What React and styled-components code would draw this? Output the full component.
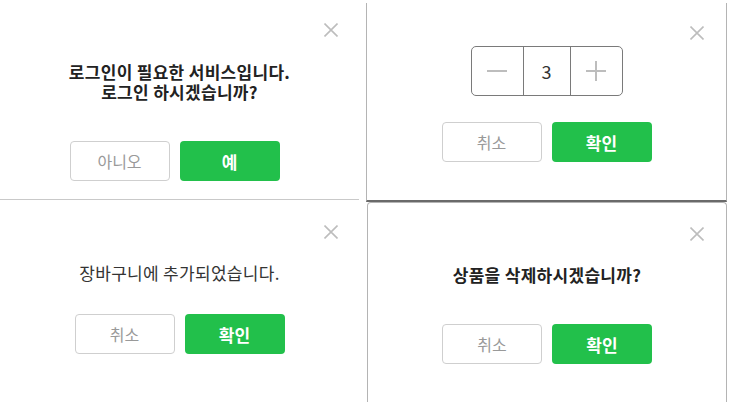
import styled, { createGlobalStyle } from 'styled-components'

const GlobalStyle = createGlobalStyle`
  html, body {
    margin: 0;
    padding: 0;
    background: #fff;
  }
  body {
    font-family: "Noto Sans CJK KR", "Noto Sans", sans-serif;
    color: #222;
  }
`

const CloseIcon = () => (
    <svg width="14" height="14" viewBox="0 0 14 14">
        <path d="M0.5 0.5 L13.5 13.5 M13.5 0.5 L0.5 13.5" stroke="#bdbdbd" strokeWidth="1.6" fill="none" />
    </svg>
)

const App = () => {
    return (
        <>
            <GlobalStyle />
            <Page>
                <LeftColumn>
                    <LoginDialog>
                        <Close $top={23} $right={21}><CloseIcon /></Close>
                        <Message $bold>
                            로그인이 필요한 서비스입니다.<br />
                            로그인 하시겠습니까?
                        </Message>
                        <ButtonRow $top={39} $shift={-10}>
                            <CancelButton>아니오</CancelButton>
                            <ConfirmButton>예</ConfirmButton>
                        </ButtonRow>
                    </LoginDialog>
                    <CartDialog>
                        <Close $top={25} $right={21}><CloseIcon /></Close>
                        <Message>장바구니에 추가되었습니다.</Message>
                        <ButtonRow $top={31}>
                            <CancelButton>취소</CancelButton>
                            <ConfirmButton>확인</ConfirmButton>
                        </ButtonRow>
                    </CartDialog>
                </LeftColumn>
                <RightColumn>
                    <QuantityDialog>
                        <Close $top={23} $right={22}><CloseIcon /></Close>
                        <Stepper>
                            <StepButton>
                                <svg width="20" height="20" viewBox="0 0 20 20">
                                    <path d="M0 10 H20" stroke="#bdbdbd" strokeWidth="2" />
                                </svg>
                            </StepButton>
                            <StepValue>3</StepValue>
                            <StepButton>
                                <svg width="20" height="20" viewBox="0 0 20 20">
                                    <path d="M0 10 H20 M10 0 V20" stroke="#bdbdbd" strokeWidth="2" />
                                </svg>
                            </StepButton>
                        </Stepper>
                        <ButtonRow $top={26}>
                            <CancelButton>취소</CancelButton>
                            <ConfirmButton>확인</ConfirmButton>
                        </ButtonRow>
                    </QuantityDialog>
                    <DeleteDialog>
                        <Close $top={24} $right={22}><CloseIcon /></Close>
                        <Message $bold>상품을 삭제하시겠습니까?</Message>
                        <ButtonRow $top={39}>
                            <CancelButton>취소</CancelButton>
                            <ConfirmButton>확인</ConfirmButton>
                        </ButtonRow>
                    </DeleteDialog>
                </RightColumn>
            </Page>
        </>
    )
}

export default App


const Page = styled.div`
    width: 729px;
    height: 415px;
    display: grid;
    grid-template-columns: 359px 361px;
    column-gap: 7px;
    align-items: start;
    overflow: hidden;
    background: #fff;
`;

const LeftColumn = styled.div`
    display: flex;
    flex-direction: column;
`;

const RightColumn = styled.div`
    display: flex;
    flex-direction: column;
    padding-top: 3px;
`;

const Dialog = styled.div`
    position: relative;
    box-sizing: border-box;
    display: flex;
    flex-direction: column;
    align-items: center;
    background: #fff;
`;

const LoginDialog = styled(Dialog)`
    height: 200px;
    padding-top: 62px;
    border-bottom: 1px solid #c9c9c9;
`;

const CartDialog = styled(Dialog)`
    height: 198px;
    padding-top: 63px;
`;

const QuantityDialog = styled(Dialog)`
    height: 199px;
    padding-top: 43px;
    border: 1px solid #b4b4b4;
    border-top: none;
    border-bottom: 2px solid #6a6a6a;
`;

const DeleteDialog = styled(Dialog)`
    height: 200px;
    margin-left: 1px;
    padding-top: 62px;
    border: 1px solid #b4b4b4;
    border-bottom: none;
    border-radius: 4px 4px 0 0;
`;

const Close = styled.button`
    position: absolute;
    top: ${p => p.$top}px;
    right: ${p => p.$right}px;
    width: 14px;
    height: 14px;
    padding: 0;
    border: none;
    background: none;
    display: flex;
    cursor: pointer;
`;

const Message = styled.p`
    margin: 0;
    font-size: 17px;
    line-height: 20px;
    letter-spacing: 0.3px;
    text-align: center;
    font-weight: ${p => (p.$bold ? 700 : 400)};
    color: ${p => (p.$bold ? '#222' : '#333')};
`;

const ButtonRow = styled.div`
    display: flex;
    gap: 10px;
    margin-top: ${p => p.$top}px;
    margin-left: ${p => p.$shift || 0}px;
`;

const BaseButton = styled.button`
    box-sizing: border-box;
    width: 100px;
    height: 40px;
    border-radius: 4px;
    font-family: "Noto Sans CJK KR", "Noto Sans", sans-serif;
    font-size: 16px;
    padding: 0;
    cursor: pointer;
`;

const CancelButton = styled(BaseButton)`
    background: #fff;
    border: 1px solid #cfcfcf;
    color: #999;
`;

const ConfirmButton = styled(BaseButton)`
    background: #22c04b;
    border: none;
    color: #fff;
    font-weight: 700;
    font-size: 17px;
`;

const Stepper = styled.div`
    box-sizing: border-box;
    width: 152px;
    height: 50px;
    display: grid;
    grid-template-columns: 51px 1fr 51px;
    border: 1px solid #7a7a7a;
    border-radius: 5px;
    overflow: hidden;
`;

const StepButton = styled.div`
    display: flex;
    align-items: center;
    justify-content: center;
`;

const StepValue = styled.div`
    display: flex;
    align-items: center;
    justify-content: center;
    border-left: 1px solid #7a7a7a;
    border-right: 1px solid #7a7a7a;
    font-size: 18px;
    color: #333;
`;
